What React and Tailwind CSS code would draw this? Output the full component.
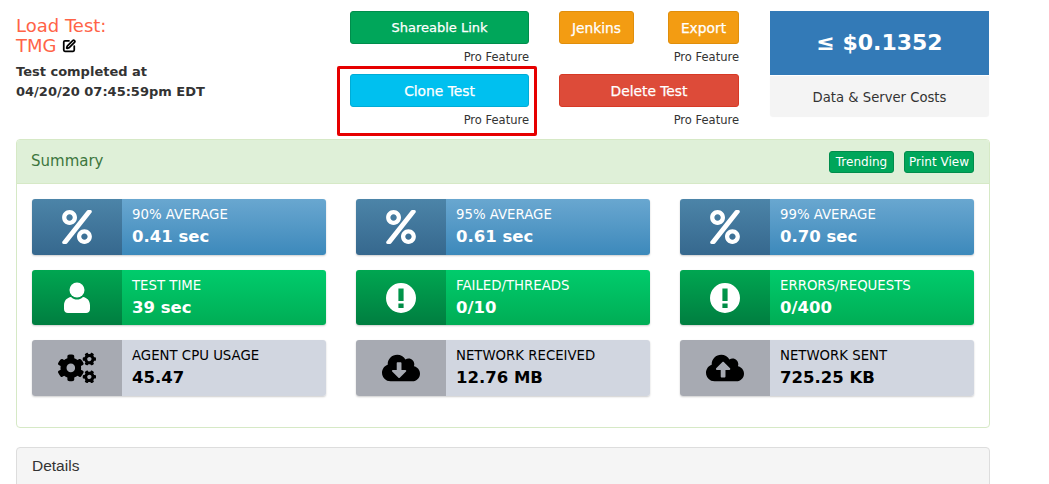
import { SquarePen } from 'lucide-react';
import { FaPercent, FaCogs, FaCloudDownloadAlt, FaCloudUploadAlt } from 'react-icons/fa';

const blue = {
  icon: 'bg-gradient-to-b from-[#4c84a8] to-[#36688e] text-white',
  body: 'bg-gradient-to-b from-[#69a7d0] to-[#3c89bb] text-white',
};
const green = {
  icon: 'bg-gradient-to-b from-[#00a651] to-[#007e40] text-white',
  body: 'bg-gradient-to-b from-[#00cc6c] to-[#00ad55] text-white',
};
const gray = {
  icon: 'bg-[#a7aab2] text-black',
  body: 'bg-[#d1d6e0] text-black',
};

const UserIcon = () => (
  <svg width="26" height="31" viewBox="0 0 26 31" fill="currentColor">
    <circle cx="13" cy="8" r="7.5" />
    <path d="M7 15c2 2 4 2.6 6 2.6s4-.6 6-2.6c4 .6 7 3.6 7 8.4v3.6c0 2.4-1.6 4-4 4H4c-2.4 0-4-1.6-4-4v-3.6C0 18.600 3 15.600 7 15z" />
  </svg>
);

const AlertIcon = () => (
  <svg width="30" height="30" viewBox="0 0 30 30" fill="currentColor">
    <path
      fillRule="evenodd"
      d="M15 0a15 15 0 1 0 0 30a15 15 0 0 0 0-30zM12.400 5.500h5.200v12.500h-5.200zM12.400 20.500h5.200v4.500h-5.200z"
    />
  </svg>
);

const tiles = [
  { label: '90% AVERAGE', value: '0.41 sec', Icon: FaPercent, size: 'text-[34px]', tone: blue, h: 'h-[56px]' },
  { label: '95% AVERAGE', value: '0.61 sec', Icon: FaPercent, size: 'text-[34px]', tone: blue, h: 'h-[56px]' },
  { label: '99% AVERAGE', value: '0.70 sec', Icon: FaPercent, size: 'text-[34px]', tone: blue, h: 'h-[56px]' },
  { label: 'TEST TIME', value: '39 sec', Icon: UserIcon, tone: green, h: 'h-[55px]' },
  { label: 'FAILED/THREADS', value: '0/10', Icon: AlertIcon, tone: green, h: 'h-[55px]' },
  { label: 'ERRORS/REQUESTS', value: '0/400', Icon: AlertIcon, tone: green, h: 'h-[55px]' },
  { label: 'AGENT CPU USAGE', value: '45.47', Icon: FaCogs, size: 'text-[38px]', tone: gray, h: 'h-[56px]' },
  { label: 'NETWORK RECEIVED', value: '12.76 MB', Icon: FaCloudDownloadAlt, size: 'text-[38px]', tone: gray, h: 'h-[56px]' },
  { label: 'NETWORK SENT', value: '725.25 KB', Icon: FaCloudUploadAlt, size: 'text-[38px]', tone: gray, h: 'h-[56px]' },
];

const Tile = ({ label, value, Icon, size, tone, h }) => (
  <div className={`flex ${h} rounded-[3px] overflow-hidden shadow-[0_1px_2px_rgba(0,0,0,0.2)]`}>
    <div className={`w-[90px] flex items-center justify-center ${size || ''} ${tone.icon}`}>
      <Icon />
    </div>
    <div className={`flex-1 pl-[10px] pt-[7px] ${tone.body}`}>
      <div className="text-[13.3px] leading-[18px]">{label}</div>
      <div className="text-[16.5px] leading-[25px] font-bold">{value}</div>
    </div>
  </div>
);

const ActionButton = ({ label, color, className = 'text-[13.8px]' }) => (
  <div className={`h-[33px] pt-[1px] rounded-[3px] border flex items-center justify-center text-white [-webkit-text-stroke:0.25px_white] ${color} ${className}`}>
    {label}
  </div>
);

const ProNote = () => (
  <div className="mt-[6px] h-[15px] text-right text-[11.5px] leading-[15px] text-[#333]">Pro Feature</div>
);

const SmallButton = ({ label, className }) => (
  <div className={`h-[22px] rounded-[3px] bg-[#00a65a] border border-[#008d4c] text-white text-[12px] flex items-center justify-center ${className}`}>
    {label}
  </div>
);

export default function App() {
  return (
    <div className="w-[1049px] h-[484px] overflow-hidden bg-white font-['DejaVu_Sans',sans-serif] text-[#333]">
      <div className="flex pt-[11px] pl-[16px] h-[139px]">
        <div className="w-[334px]">
          <div className="text-[18px] leading-[20px] pt-[5px] text-[#ff6347]">Load Test:</div>
          <div className="flex items-center gap-[6px] text-[18px] leading-[20px] text-[#ff6347]">
            TMG <SquarePen size={14} strokeWidth={3} className="text-black" />
          </div>
          <div className="mt-[6px] text-[13px] leading-[20px] font-bold">
            Test completed at
            <br />
            04/20/20 07:45:59pm EDT
          </div>
        </div>

        <div className="relative w-[179px]">
          <ActionButton label="Shareable Link" color="bg-[#00a65a] border-[#008d4c]" className="text-[13px]" />
          <ProNote />
          <div className="mt-[9px]">
            <ActionButton label="Clone Test" color="bg-[#00c0ef] border-[#00acd6]" />
            <ProNote />
          </div>
          <div className="absolute left-[-13px] top-[55px] w-[200px] h-[70px] border-[3px] border-[#e60000] rounded-[2px]" />
        </div>

        <div className="w-[180px] ml-[30px]">
          <div className="flex justify-between">
            <ActionButton label="Jenkins" color="bg-[#f39c12] border-[#e08e0b]" className="w-[75px] text-[13.8px]" />
            <ActionButton label="Export" color="bg-[#f39c12] border-[#e08e0b]" className="w-[71px] text-[13.8px]" />
          </div>
          <ProNote />
          <div className="mt-[9px]">
            <ActionButton label="Delete Test" color="bg-[#dd4b39] border-[#d73925]" />
            <ProNote />
          </div>
        </div>

        <div className="w-[219px] ml-[31px]">
          <div className="h-[64px] pb-[2px] bg-[#337ab7] text-white text-[22px] font-bold flex items-center justify-center">
            ≤ $0.1352
          </div>
          <div className="h-[40px] mt-[1px] pt-[4px] bg-[#f4f4f4] rounded-b-[3px] shadow-[0_1px_1px_rgba(0,0,0,0.05)] flex items-center justify-center text-[13.2px]">
            Data &amp; Server Costs
          </div>
        </div>
      </div>

      <div className="ml-[16px] w-[974px] h-[289px] border border-[#d6e9c6] rounded-[4px] overflow-hidden">
        <div className="h-[44px] bg-[#dff0d8] border-b border-[#d6e9c6] flex items-center justify-between pl-[14px] pr-[15px]">
          <span className="text-[15px] text-[#3c763d]">Summary</span>
          <div className="flex gap-[10px]">
            <SmallButton label="Trending" className="w-[65px]" />
            <SmallButton label="Print View" className="w-[70px]" />
          </div>
        </div>
        <div className="grid grid-cols-3 gap-x-[30px] gap-y-[15px] pt-[15px] pl-[15px] pr-[15px]">
          {tiles.map((tile) => (
            <Tile key={tile.label} {...tile} />
          ))}
        </div>
      </div>

      <div className="ml-[16px] mt-[19px] w-[974px] h-[60px] border border-[#ddd] rounded-[4px] bg-[#f5f5f5] pl-[15px] pt-[9px] text-[15.5px] leading-[18px] font-['Liberation_Sans',sans-serif]">
        Details
      </div>
    </div>
  );
}
